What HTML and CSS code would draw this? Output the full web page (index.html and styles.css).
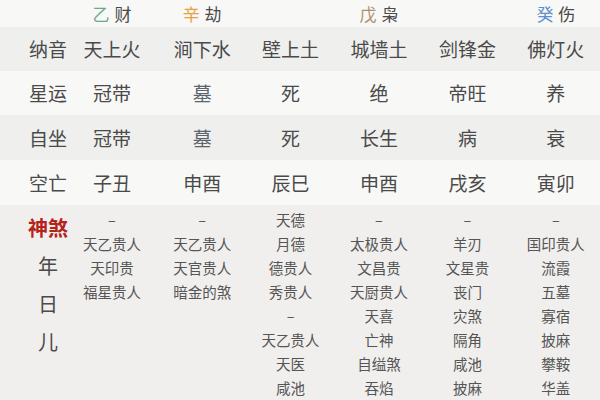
FILE: index.html
```html
<!DOCTYPE html>
<html lang="zh">
<head>
<meta charset="utf-8">
<link rel="stylesheet" href="styles.css">
</head>
<body>
<div class="chart">
  <div class="row head">
    <div class="cell label"></div>
    <div class="cell first"><span class="stem yi">乙</span> 财</div>
    <div class="cell"><span class="stem xin">辛</span> 劫</div>
    <div class="cell"></div>
    <div class="cell"><span class="stem wu">戊</span> 枭</div>
    <div class="cell"></div>
    <div class="cell"><span class="stem gui">癸</span> 伤</div>
  </div>
  <div class="row main dark r1">
    <div class="cell label">纳音</div>
    <div class="cell first">天上火</div>
    <div class="cell">涧下水</div>
    <div class="cell">壁上土</div>
    <div class="cell">城墙土</div>
    <div class="cell">剑锋金</div>
    <div class="cell">佛灯火</div>
  </div>
  <div class="row main light r2">
    <div class="cell label">星运</div>
    <div class="cell first">冠带</div>
    <div class="cell muted">墓</div>
    <div class="cell">死</div>
    <div class="cell">绝</div>
    <div class="cell">帝旺</div>
    <div class="cell">养</div>
  </div>
  <div class="row main dark r3">
    <div class="cell label">自坐</div>
    <div class="cell first">冠带</div>
    <div class="cell muted">墓</div>
    <div class="cell">死</div>
    <div class="cell">长生</div>
    <div class="cell">病</div>
    <div class="cell">衰</div>
  </div>
  <div class="row main light r4">
    <div class="cell label">空亡</div>
    <div class="cell first">子丑</div>
    <div class="cell">申酉</div>
    <div class="cell">辰巳</div>
    <div class="cell">申酉</div>
    <div class="cell">戌亥</div>
    <div class="cell">寅卯</div>
  </div>
  <div class="row gods">
    <div class="cell label stack">
      <span class="red">神煞</span>
      <span>年</span>
      <span>日</span>
      <span>儿</span>
    </div>
    <div class="cell first list">
      <span>–</span><span>天乙贵人</span><span>天印贵</span><span>福星贵人</span>
    </div>
    <div class="cell list">
      <span>–</span><span>天乙贵人</span><span>天官贵人</span><span>暗金的煞</span>
    </div>
    <div class="cell list">
      <span>天德</span><span>月德</span><span>德贵人</span><span>秀贵人</span><span>–</span><span>天乙贵人</span><span>天医</span><span>咸池</span>
    </div>
    <div class="cell list">
      <span>–</span><span>太极贵人</span><span>文昌贵</span><span>天厨贵人</span><span>天喜</span><span>亡神</span><span>自缢煞</span><span>吞焰</span>
    </div>
    <div class="cell list">
      <span>–</span><span>羊刃</span><span>文星贵</span><span>丧门</span><span>灾煞</span><span>隔角</span><span>咸池</span><span>披麻</span>
    </div>
    <div class="cell list">
      <span>–</span><span>国印贵人</span><span>流霞</span><span>五墓</span><span>寡宿</span><span>披麻</span><span>攀鞍</span><span>华盖</span>
    </div>
  </div>
</div>
</body>
</html>
```

FILE: styles.css
```css
html, body {
  margin: 0;
  padding: 0;
  background: #f0efed;
}
body {
  width: 600px;
  height: 400px;
  overflow: hidden;
  font-family: "Noto Sans CJK SC", "Noto Sans", sans-serif;
  color: #4a4a4a;
}
.chart {
  display: flex;
  flex-direction: column;
  height: 400px;
}
.row {
  display: grid;
  grid-template-columns: 80px 78px repeat(5, 1fr);
  align-items: center;
}
.cell {
  text-align: center;
  white-space: nowrap;
}
.cell.label {
  padding-left: 16px;
}
.cell.first {
  padding-right: 14px;
}
.head {
  height: 27px;
  background: #f8f8f6;
  font-size: 17px;
  color: #4a4a4a;
  line-height: 27px;
}
.stem { margin-right: 1px; }
.stem.yi { color: #6da88d; }
.stem.xin { color: #e6a245; }
.stem.wu { color: #ad9270; }
.stem.gui { color: #5b8fd1; }
.main {
  font-size: 19px;
  line-height: 24px;
}
.r1 { height: 44px; }
.r2 { height: 44px; }
.r3 { height: 45px; }
.r4 { height: 45px; }
.dark { background: #efefed; }
.light { background: #f8f8f7; }
.muted { color: #5b6570; }
.gods {
  flex: 1;
  align-items: start;
  background: #f0efed;
}
.stack {
  display: flex;
  flex-direction: column;
  align-items: center;
  padding-top: 4px;
  font-size: 20px;
  line-height: 38px;
}
.red {
  color: #b5231b;
  font-weight: 700;
}
.list {
  display: flex;
  flex-direction: column;
  align-items: center;
  padding-top: 3px;
  font-size: 14.5px;
  line-height: 24px;
  color: #555;
}
```
